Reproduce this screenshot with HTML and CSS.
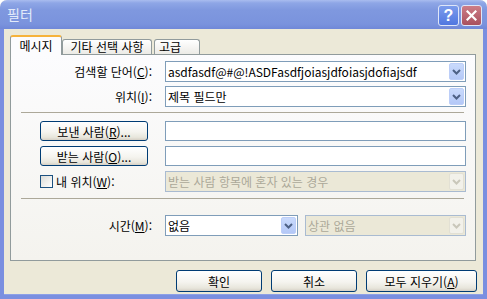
FILE: index.html
```html
<!DOCTYPE html>
<html lang="ko">
<head>
    <meta charset="UTF-8">
    <title>필터</title>
    <link rel="stylesheet" href="styles.css">
</head>
<body>
    <div class="window">
        <!-- Title bar -->
        <div class="titlebar">
            <span class="title">필터</span>
            <div class="title-buttons">
                <span class="tbtn help">?</span>
                <span class="tbtn close">
                    <svg width="11" height="11" viewBox="0 0 11 11"><path d="M1.5 1.5 L9.5 9.5 M9.5 1.5 L1.5 9.5" stroke="#fff" stroke-width="2.2" stroke-linecap="square"/></svg>
                </span>
            </div>
        </div>

        <div class="client">
            <div class="tabs">
                <div class="tab active">메시지</div>
                <div class="tab tab-other">기타 선택 사항</div>
                <div class="tab tab-adv">고급</div>
            </div>

            <div class="panel">
                <div class="field-row first">
                    <div class="cell label">검색할 단어(<u>C</u>):</div>
                    <div class="combo full">
                        <span class="combo-text">asdfasdf@#@!ASDFasdfjoiasjdfoiasjdofiajsdf</span>
                        <span class="drop"><svg width="9" height="6" viewBox="0 0 9 6"><path d="M1 1 L4.5 4.5 L8 1" fill="none" stroke="#4d6185" stroke-width="2"/></svg></span>
                    </div>
                </div>
                <div class="field-row gap4">
                    <div class="cell label">위치(<u>I</u>):</div>
                    <div class="combo full">
                        <span class="combo-text">제목 필드만</span>
                        <span class="drop"><svg width="9" height="6" viewBox="0 0 9 6"><path d="M1 1 L4.5 4.5 L8 1" fill="none" stroke="#4d6185" stroke-width="2"/></svg></span>
                    </div>
                </div>

                <div class="separator sep-top"></div>

                <div class="field-row short gap8">
                    <div class="cell indent"><span class="push-btn small">보낸 사람(<u>R</u>)...</span></div>
                    <div class="textbox"></div>
                </div>
                <div class="field-row short gap5">
                    <div class="cell indent"><span class="push-btn small">받는 사람(<u>O</u>)...</span></div>
                    <div class="textbox"></div>
                </div>
                <div class="field-row gap5">
                    <div class="cell indent">
                        <span class="checkbox"></span>
                        <span class="check-label">내 위치(<u>W</u>):</span>
                    </div>
                    <div class="combo full disabled">
                        <span class="combo-text">받는 사람 항목에 혼자 있는 경우</span>
                        <span class="drop"><svg width="9" height="6" viewBox="0 0 9 6"><path d="M1 1 L4.5 4.5 L8 1" fill="none" stroke="#c9c7ba" stroke-width="2"/></svg></span>
                    </div>
                </div>

                <div class="separator sep-bottom"></div>

                <div class="field-row gap16">
                    <div class="cell label">시간(<u>M</u>):</div>
                    <div class="combo time">
                        <span class="combo-text">없음</span>
                        <span class="drop"><svg width="9" height="6" viewBox="0 0 9 6"><path d="M1 1 L4.5 4.5 L8 1" fill="none" stroke="#4d6185" stroke-width="2"/></svg></span>
                    </div>
                    <div class="combo range disabled">
                        <span class="combo-text">상관 없음</span>
                        <span class="drop"><svg width="9" height="6" viewBox="0 0 9 6"><path d="M1 1 L4.5 4.5 L8 1" fill="none" stroke="#c9c7ba" stroke-width="2"/></svg></span>
                    </div>
                </div>
            </div>

            <!-- Dialog buttons -->
            <div class="actions">
                <span class="push-btn ok">확인</span>
                <span class="push-btn cancel">취소</span>
                <span class="push-btn clear">모두 지우기(<u>A</u>)</span>
            </div>
        </div>
    </div>
</body>
</html>
```

FILE: styles.css
```css
body {
    margin: 0;
    background: #ffffff;
    font-family: "Noto Sans CJK KR", "Noto Sans", sans-serif;
    font-size: 12px;
    color: #000000;
}

.window {
    width: 487px;
    height: 299px;
    display: flex;
    flex-direction: column;
    border-radius: 7px 7px 0 0;
    overflow: hidden;
    background: #ece9d8;
}

/* Title bar */
.titlebar {
    height: 29px;
    flex-shrink: 0;
    display: flex;
    justify-content: space-between;
    padding: 0 5px 0 7px;
    background: linear-gradient(to bottom, #a9bcef 0, #8ea6e6 3px, #7f98df 10px, #7a93dd 24px, #7088d8 29px);
}

.title {
    color: #e2eafa;
    font-size: 14px;
    line-height: 28px;
}

.title-buttons {
    display: flex;
    gap: 2px;
    padding-top: 5px;
}

.tbtn {
    width: 21px;
    height: 21px;
    box-sizing: border-box;
    border: 1px solid #dfe6f8;
    border-radius: 3px;
    display: flex;
    align-items: center;
    justify-content: center;
}

.help {
    background: linear-gradient(to bottom, #7c9cec, #5077e0);
    color: #ffffff;
    font-family: "Liberation Sans", sans-serif;
    font-weight: bold;
    font-size: 16px;
    line-height: 19px;
}

.close {
    background: linear-gradient(to bottom, #cd7d87, #a9505e);
}

/* Client area with frame */
.client {
    flex: 1;
    border: 4px solid #7a8fe0;
    border-top: 0;
    padding: 6px 6px 0 6px;
    display: flex;
    flex-direction: column;
    box-shadow: inset 0 -1px #8da0e6;
}

/* Tabs */
.tabs {
    display: flex;
    align-items: flex-end;
    height: 19px;
}

.tab {
    box-sizing: border-box;
    height: 15px;
    line-height: 13px;
    border: 1px solid #919b9c;
    border-bottom: 0;
    border-radius: 3px 3px 0 0;
    background: linear-gradient(to bottom, #ffffff, #ecebe6);
    text-align: center;
    white-space: nowrap;
}

.tab.active {
    width: 52px;
    height: 20px;
    line-height: 17px;
    margin-bottom: -1px;
    position: relative;
    z-index: 1;
    border-top: 2px solid #f6b33c;
    background: #fcfcfe;
}

.tab-other {
    width: 90px;
}

.tab-adv {
    width: 46px;
    margin-left: 2px;
    text-align: left;
    padding-left: 4px;
}

/* Tab page */
.panel {
    width: 466px;
    height: 207px;
    box-sizing: border-box;
    border: 1px solid #919b9c;
    background: linear-gradient(to bottom, #fcfcfe, #f4f3ee);
    display: flex;
    flex-direction: column;
}

.field-row {
    display: flex;
    align-items: center;
    height: 21px;
    flex-shrink: 0;
}

.field-row.short {
    height: 20px;
}

.field-row.first { margin-top: 6px; }
.field-row.gap4 { margin-top: 4px; }
.field-row.gap5 { margin-top: 5px; }
.field-row.gap8 { margin-top: 8px; }
.field-row.gap16 { margin-top: 16px; }

.cell {
    width: 141px;
    margin-right: 13px;
    flex-shrink: 0;
    white-space: nowrap;
}

.cell.label {
    text-align: right;
}

.cell.indent {
    display: flex;
    align-items: center;
    padding-left: 29px;
    box-sizing: border-box;
}

.separator {
    height: 1px;
    width: 443px;
    margin-left: 10px;
    background: #aca899;
    flex-shrink: 0;
}

.sep-top { margin-top: 5px; }
.sep-bottom { margin-top: 6px; }

/* Combo boxes */
.combo {
    height: 21px;
    box-sizing: border-box;
    border: 1px solid #7f9db9;
    background: #ffffff;
    display: flex;
    align-items: center;
    flex-shrink: 0;
}

.combo.full { width: 301px; }
.combo.time { width: 133px; margin-right: 7px; }
.combo.range { width: 161px; }

.combo-text {
    flex: 1;
    padding-left: 2px;
    white-space: nowrap;
    overflow: hidden;
}

.drop {
    width: 15px;
    height: 17px;
    margin-right: 1px;
    box-sizing: border-box;
    border: 1px solid #bccef8;
    border-radius: 2px;
    background: linear-gradient(to bottom, #c9dafc, #b4c8f7);
    display: flex;
    align-items: center;
    justify-content: center;
}

.combo.disabled {
    border-color: #a9bbd1;
    background: #ebe8d7;
    color: #aca899;
}

.combo.disabled .drop {
    border-color: #e2e0d4;
    background: #f2f1ea;
}

/* Text boxes */
.textbox {
    width: 301px;
    height: 20px;
    box-sizing: border-box;
    border: 1px solid #7f9db9;
    background: #ffffff;
}

/* Check box */
.checkbox {
    width: 13px;
    height: 13px;
    box-sizing: border-box;
    border: 1px solid #1c5180;
    background: linear-gradient(135deg, #dcdcd7, #ffffff);
    flex-shrink: 0;
}

.check-label {
    margin-left: 3px;
}

/* Push buttons */
.push-btn {
    box-sizing: border-box;
    height: 22px;
    border: 1px solid #003c74;
    border-radius: 3px;
    background: linear-gradient(to bottom, #ffffff 0, #f5f4ef 55%, #e8e6dc 85%, #d6d0c5 100%);
    display: flex;
    align-items: center;
    justify-content: center;
    white-space: nowrap;
}

.push-btn.small {
    width: 108px;
    height: 20px;
}

.actions {
    display: flex;
    justify-content: flex-end;
    gap: 9px;
    margin-top: 9px;
}

.push-btn.ok { width: 86px; }
.push-btn.cancel { width: 86px; }
.push-btn.clear { width: 111px; }
```
